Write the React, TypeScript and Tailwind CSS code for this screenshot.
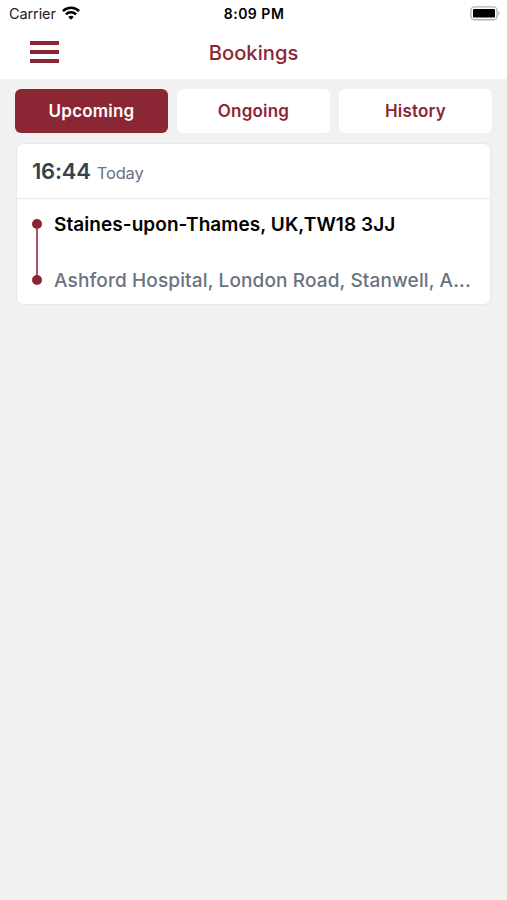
import { useState } from "react";

const TABS = ["Upcoming", "Ongoing", "History"];

function StatusBar() {
  return (
    <div className="grid h-[27px] grid-cols-3 items-center pl-[9px] pr-[6px] text-black">
      <div className="flex items-center gap-[6px]">
        <span className="text-[14.5px] leading-[27px] tracking-[-0.1px] text-[#222222]">Carrier</span>
        <svg className="-mt-[2px]" width="18" height="14" viewBox="0 0 18 14" fill="none" stroke="#000000" strokeWidth="2.4">
          <path d="M0.9 5.2a11.4 11.4 0 0 1 16.2 0" />
          <path d="M3.9 8.3a7.2 7.2 0 0 1 10.2 0" />
          <path d="M9 13.8 6.2 11a4 4 0 0 1 5.6 0Z" fill="#000000" stroke="none" />
        </svg>
      </div>
      <span className="-ml-[2px] text-center text-[14px] font-semibold tracking-[0.5px]">8:09 PM</span>
      <svg className="justify-self-end" width="31" height="15" viewBox="0 0 31 15" fill="none">
        <rect x="0.9" y="0.9" width="26.2" height="12.8" rx="3.6" stroke="#b4b4b4" strokeWidth="1.4" />
        <rect x="3" y="3" width="22" height="8.6" rx="1.2" fill="#000000" />
        <path d="M28.4 5.2c1.6.6 1.6 3.6 0 4.2Z" fill="#b4b4b4" />
      </svg>
    </div>
  );
}

function Header() {
  return (
    <header className="h-[79px] bg-white">
      <StatusBar />
      <div className="grid h-[51px] grid-cols-[1fr_auto_1fr] items-center">
        <button type="button" aria-label="Menu" className="mb-[2px] ml-[30px] flex w-[29px] flex-col gap-[5px]">
          <span className="h-[4px] bg-[#8b2635]" />
          <span className="h-[4px] bg-[#8b2635]" />
          <span className="h-[4px] bg-[#8b2635]" />
        </button>
        <h1 className="pt-[2px] text-[20.2px] font-medium text-[#8b2635]">Bookings</h1>
      </div>
    </header>
  );
}

function BookingCard() {
  return (
    <article className="mx-4 mt-[10px] h-[162px] rounded-[7px] border border-[#e9e9eb] bg-white">
      <div className="flex h-[55px] items-baseline border-b border-[#e9eaec] px-[15px] pt-[10px]">
        <span className="text-[22px] font-semibold leading-[34px] tracking-[-0.2px] text-[#374151]">16:44</span>
        <span className="ml-[6px] text-[16.5px] tracking-[-0.15px] text-[#6b7280]">Today</span>
      </div>
      <div className="flex pl-[15px] pr-[18px] pt-[11px]">
        <div className="flex w-[10px] shrink-0 flex-col items-center pt-[9px]">
          <span className="size-[10px] rounded-full bg-[#8b2635]" />
          <span className="h-[46px] w-[1.5px] bg-[#a95366]" />
          <span className="size-[10px] rounded-full bg-[#8b2635]" />
        </div>
        <div className="ml-[12px] min-w-0 flex-1 pt-px text-[19px] leading-7">
          <p className="whitespace-nowrap font-semibold tracking-[0.06px] text-black">
            Staines-upon-Thames, UK,TW18 3JJ
          </p>
          <p className="mt-7 whitespace-nowrap font-medium tracking-[0.13px] text-[#6b7280]">
            Ashford Hospital, London Road, Stanwell, A...
          </p>
        </div>
      </div>
    </article>
  );
}

export default function App() {
  const [active, setActive] = useState("Upcoming");

  return (
    <div className="min-h-screen bg-[#f1f1f1] font-['Inter',sans-serif]">
      <Header />
      <nav className="flex gap-[9px] px-[15px] pt-[10px]">
        {TABS.map((tab) => (
          <button
            key={tab}
            type="button"
            onClick={() => setActive(tab)}
            className={`h-[44px] flex-1 rounded-[6px] pt-px text-[17px] font-semibold tracking-[0.2px] ${
              tab === active ? "bg-[#8b2635] text-white" : "bg-white text-[#8b2635]"
            }`}
          >
            {tab}
          </button>
        ))}
      </nav>
      <BookingCard />
    </div>
  );
}
